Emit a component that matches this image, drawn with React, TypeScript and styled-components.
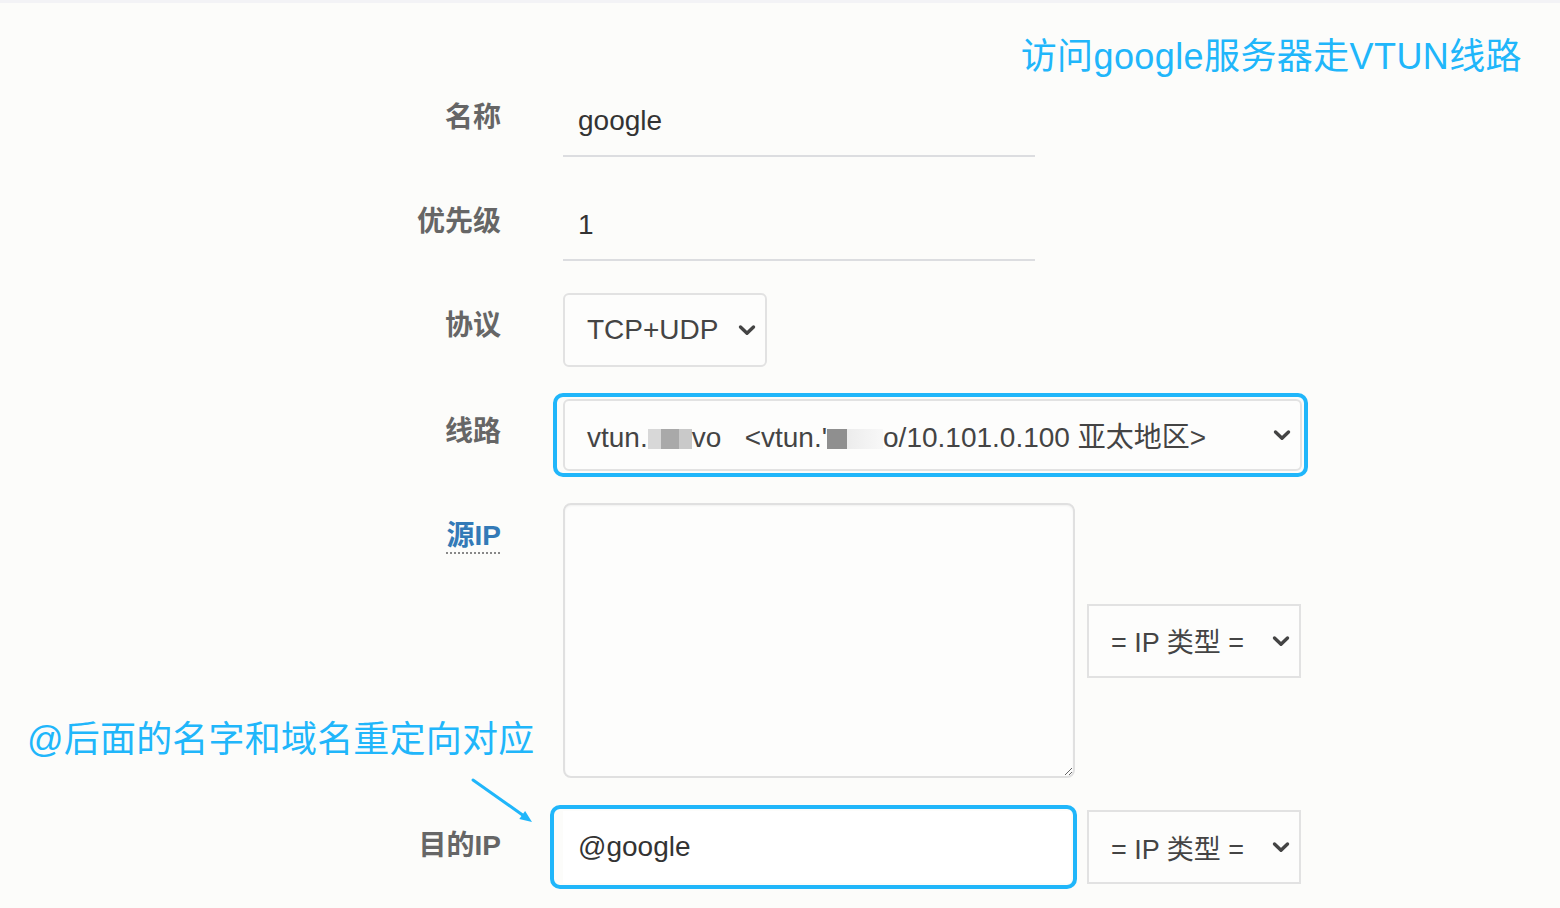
import React from "react";
import styled, { createGlobalStyle } from "styled-components";

const GlobalStyle = createGlobalStyle`
  html, body {
    margin: 0;
    padding: 0;
    background: #fcfcfa;
  }
  body {
    font-family: "Liberation Sans", "Noto Sans CJK SC", sans-serif;
  }
`;

const Page = styled.div`
  position: relative;
  width: 1560px;
  height: 908px;
  overflow: hidden;
  background: #fcfcfa;
`;

const TopStrip = styled.div`
  height: 3px;
  background: #f3f3f6;
`;

const Header = styled.div`
  display: flex;
  justify-content: flex-end;
  box-sizing: border-box;
  height: 82px;
  padding: 32px 38px 0 0;
`;

const Note = styled.div`
  font-size: 36px;
  line-height: 44px;
  letter-spacing: 0.4px;
  color: #20b6fa;
  white-space: nowrap;
`;

const SideNote = styled(Note)`
  position: absolute;
  left: 27px;
  top: 718px;
  letter-spacing: 0.2px;
`;

const Arrow = styled.svg`
  position: absolute;
  left: 466px;
  top: 772px;
`;

const Form = styled.form`
  display: flex;
  flex-direction: column;
  gap: 32px;
`;

const Row = styled.div`
  display: flex;
  align-items: flex-start;
`;

const Label = styled.label<{ $top?: number }>`
  flex-shrink: 0;
  width: 501px;
  padding-top: ${(p) => p.$top ?? 13}px;
  text-align: right;
  font-size: 28px;
  line-height: 40px;
  font-weight: 700;
  color: #666;
`;

const Abbr = styled.abbr`
  color: #337ab7;
  text-decoration: underline dotted #888;
  text-decoration-thickness: 2px;
  text-underline-offset: 7px;
  cursor: help;
`;

const Controls = styled.div<{ $gap?: number }>`
  display: flex;
  align-items: center;
  gap: ${(p) => p.$gap ?? 12}px;
  margin-left: 62px;
`;

const LineInput = styled.input`
  box-sizing: border-box;
  width: 472px;
  height: 72px;
  padding: 2px 15px 0;
  border: none;
  border-bottom: 2px solid #dcdde0;
  background: transparent;
  font-family: inherit;
  font-size: 28px;
  color: #333;
  outline: none;
`;

const SelectBox = styled.div<{ $w: number; $h: number; $radius: number; $size?: number }>`
  box-sizing: border-box;
  display: flex;
  align-items: center;
  justify-content: space-between;
  width: ${(p) => p.$w}px;
  height: ${(p) => p.$h}px;
  padding: 0 8px 0 22px;
  border: 2px solid #e2e2e2;
  border-radius: ${(p) => p.$radius}px;
  background: #fdfdfc;
  font-size: ${(p) => p.$size ?? 28}px;
  color: #444;
  white-space: pre;
`;

const Mask = styled.span<{ $w: number; $bg: string }>`
  display: inline-block;
  width: ${(p) => p.$w}px;
  height: 20px;
  vertical-align: -2px;
  background: ${(p) => p.$bg};
`;

const Highlight = styled.div<{ $l: number; $r: number }>`
  display: flex;
  margin: -6px -${(p) => p.$r}px -6px -${(p) => p.$l}px;
  padding: 2px ${(p) => p.$r - 4}px 2px ${(p) => p.$l - 4}px;
  border: 4px solid #20b6fa;
  border-radius: 10px;
`;

const TextArea = styled.textarea`
  box-sizing: border-box;
  width: 512px;
  height: 275px;
  border: 2px solid #e0e0e0;
  border-radius: 8px;
  background: #fdfdfc;
  box-shadow: inset 0 1px 2px rgba(0, 0, 0, 0.05);
  font-family: inherit;
  font-size: 28px;
  outline: none;
`;

const DestInput = styled.input`
  box-sizing: border-box;
  width: 508px;
  height: 72px;
  padding: 0 0 0 15px;
  border: none;
  background: #fff;
  font-family: inherit;
  font-size: 28px;
  color: #333;
  outline: none;
`;

const Chevron = () => (
  <svg width="20" height="20" viewBox="0 0 20 20">
    <path d="M3.5 7 10 13.2 16.5 7" fill="none" stroke="#444" strokeWidth="3.4" strokeLinecap="round" strokeLinejoin="round" />
  </svg>
);

const App: React.FC = () => {
  return (
    <Page>
      <GlobalStyle />
      <TopStrip />
      <Header>
        <Note>访问google服务器走VTUN线路</Note>
      </Header>
      <Form>
        <Row>
          <Label>名称</Label>
          <Controls>
            <LineInput defaultValue="google" />
          </Controls>
        </Row>
        <Row>
          <Label>优先级</Label>
          <Controls>
            <LineInput defaultValue="1" />
          </Controls>
        </Row>
        <Row>
          <Label>协议</Label>
          <Controls>
            <SelectBox $w={204} $h={74} $radius={6}>
              <span>TCP+UDP</span>
              <Chevron />
            </SelectBox>
          </Controls>
        </Row>
        <Row>
          <Label>线路</Label>
          <Controls>
            <Highlight $l={10} $r={6}>
              <SelectBox $w={739} $h={72} $radius={6}>
                <span>
                  vtun.
                  <Mask $w={44} $bg="linear-gradient(90deg, #d8d8d8 0 30%, #a9a9a9 30% 70%, #c9c9c9 70%)" />
                  vo{"   "}&lt;vtun.'
                  <Mask $w={56} $bg="linear-gradient(90deg, #8f8f8f 0 35%, #ececec 35%, #f8f8f8)" />
                  o/10.101.0.100 亚太地区&gt;
                </span>
                <Chevron />
              </SelectBox>
            </Highlight>
          </Controls>
        </Row>
        <Row>
          <Label>
            <Abbr title="源IP">源IP</Abbr>
          </Label>
          <Controls>
            <TextArea />
            <SelectBox $w={214} $h={74} $radius={0} $size={27}>
              <span>= IP 类型 =</span>
              <Chevron />
            </SelectBox>
          </Controls>
        </Row>
        <Row>
          <Label $top={16}>目的IP</Label>
          <Controls $gap={16}>
            <Highlight $l={13} $r={6}>
              <DestInput defaultValue="@google" />
            </Highlight>
            <SelectBox $w={214} $h={74} $radius={0} $size={27}>
              <span>= IP 类型 =</span>
              <Chevron />
            </SelectBox>
          </Controls>
        </Row>
      </Form>
      <SideNote>@后面的名字和域名重定向对应</SideNote>
      <Arrow width="76" height="60" viewBox="0 0 76 60">
        <line x1="7" y1="8" x2="58" y2="44" stroke="#20b6fa" strokeWidth="3" strokeLinecap="round" />
        <polygon points="66,50 53.3,47.1 59.1,38.9" fill="#20b6fa" />
      </Arrow>
    </Page>
  );
};

export default App;
